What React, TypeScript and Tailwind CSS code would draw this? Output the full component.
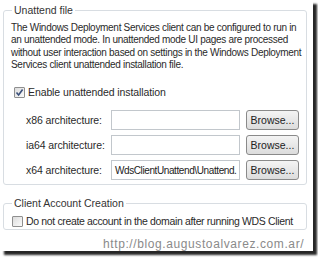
import React from "react";

const font = { fontFamily: '"Liberation Sans", Arial, sans-serif' };

const CheckBox = ({ checked }: { checked?: boolean }) => (
  <span className="flex h-[11px] w-[11px] shrink-0 items-center justify-center rounded-[1px] border border-[#8f8f8f] bg-gradient-to-br from-[#dcdcdc] to-[#fbfbfb]">
    {checked && (
      <svg width="9" height="9" viewBox="0 0 9 9">
        <path d="M1.5 4.5 L3.6 7 L7.6 1.5" fill="none" stroke="#3a4f7a" strokeWidth="1.6" />
      </svg>
    )}
  </span>
);

const PathRow = ({ label, value }: { label: string; value?: string }) => (
  <div className="flex h-[20px] items-center">
    <span className="w-[100px] shrink-0 whitespace-nowrap pl-[15px] text-[10.5px] tracking-[-0.1px] text-[#2a2a2a]">{label}</span>
    <div className="flex h-[20px] w-[129px] shrink-0 items-center overflow-hidden whitespace-nowrap border border-[#c2c7cc] bg-white px-[3px] text-[10px] tracking-[-0.4px] text-[#222]">
      {value}
    </div>
    <button className="ml-[6px] flex h-[20px] w-[53px] shrink-0 items-center justify-center rounded-[3px] border border-[#8a8a8a] bg-gradient-to-b from-[#f4f4f4] to-[#dcdcdc] text-[10.5px] text-[#222]">
      Browse...
    </button>
  </div>
);

export default function App() {
  return (
    <div className="h-[259px] w-[318px] overflow-hidden bg-white" style={font}>
      <div className="h-[251px] w-[313px] bg-white pl-[3px] pt-[4px] shadow-[4px_4px_2px_rgba(0,0,0,0.85)]">
        <fieldset className="h-[181px] w-[304px] rounded-[3px] border border-[#d8dde2] px-[7px]">
          <legend className="ml-[1px] px-[2px] text-[10.5px] leading-[13px] text-[#333]">Unattend file</legend>
          <p className="-mr-[4px] mt-[5px] text-[10px] leading-[12.4px] tracking-[-0.3px] text-[#2a2a2a]">
            The Windows Deployment Services client can be configured to run in an unattended mode. In unattended mode UI pages are processed without user interaction based on settings in the Windows Deployment Services client unattended installation file.
          </p>
          <div className="mt-[13px] flex items-center gap-[3px] pl-[3px]">
            <CheckBox checked />
            <span className="text-[10.5px] tracking-[-0.1px] text-[#2a2a2a]">Enable unattended installation</span>
          </div>
          <div className="mt-[10px] flex flex-col gap-[5px]">
            <PathRow label="x86 architecture:" />
            <PathRow label="ia64 architecture:" />
            <PathRow label="x64 architecture:" value="WdsClientUnattend\Unattend." />
          </div>
        </fieldset>
        <fieldset className="mt-[12px] h-[33px] w-[304px] rounded-[3px] border border-[#d8dde2] px-[7px]">
          <legend className="ml-[1px] px-[2px] text-[10.5px] leading-[13px] text-[#333]">Client Account Creation</legend>
          <div className="mt-[4px] flex items-center gap-[3px] pl-[1px]">
            <CheckBox />
            <span className="whitespace-nowrap text-[10.5px] tracking-[-0.35px] text-[#2a2a2a]">Do not create account in the domain after running WDS Client</span>
          </div>
        </fieldset>
        <div className="mt-[7px] whitespace-nowrap pl-[100px] text-[12px] leading-[14px] tracking-[0.6px] text-[#8a8a8a]">
          http://blog.augustoalvarez.com.ar/
        </div>
      </div>
    </div>
  );
}
